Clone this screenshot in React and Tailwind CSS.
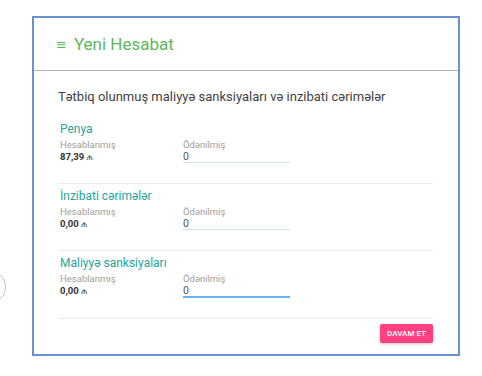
import React from 'react'

const sections = [
  { title: 'Penya', amount: '87,39', paid: '0', active: false },
  { title: 'İnzibati cərimələr', amount: '0,00', paid: '0', active: false },
  { title: 'Maliyyə sanksiyaları', amount: '0,00', paid: '0', active: true },
]

function Section({ title, amount, paid, active }) {
  return (
    <div className="pt-[4px] pb-[20px] pl-[2px]">
      <h3 className="text-[12px] leading-[16px] text-[#26a69a]">{title}</h3>
      <div className="flex mt-[2px]">
        <div className="w-[123px]">
          <p className="text-[9.5px] leading-[12px] text-[#9e9e9e]">Hesablanmış</p>
          <p className="text-[9.5px] leading-[12px] font-bold text-[#333]">
            {amount} <span className="font-normal text-[#555]">₼</span>
          </p>
        </div>
        <div className="w-[107px]">
          <p className="text-[9.5px] leading-[12px] text-[#9e9e9e]">Ödənilmiş</p>
          <div
            className={
              active
                ? 'h-[13px] border-b-2 border-[#64b5f6] text-[10.5px] leading-[12px] text-[#555]'
                : 'h-[12px] border-b border-[#c9e2f7] text-[10.5px] leading-[12px] text-[#555]'
            }
          >
            {paid}
          </div>
        </div>
      </div>
    </div>
  )
}

export default function App() {
  return (
    <div
      className="relative w-[482px] h-[376px] overflow-hidden bg-white pt-[16px] pl-[32px]"
      style={{ fontFamily: 'Roboto, "Noto Sans", "DejaVu Sans", sans-serif' }}
    >
      {/* kenardaki dairə */}
      <div className="absolute left-[-28px] top-[270px] w-[34px] h-[34px] rounded-full border-[1.5px] border-[#c4c4c4]"></div>

      <div className="w-[428px] h-[340px] border-2 border-[#6892d0] bg-white">
        {/* Header */}
        <div className="h-[53px] border-b border-[#b0b0b0] flex items-center pl-[22px]">
          <h1 className="text-[17px] leading-[24px] text-[#5cb85c] mt-[2px]">
            <span className="text-[13px] mr-[7px] relative top-[-1px]">≡</span>Yeni Hesabat
          </h1>
        </div>

        {/* Body */}
        <div className="pl-[24px] pr-[25px] pt-[16px]">
          <h2 className="text-[13px] leading-[20px] text-[#424242] mb-[10px]">
            Tətbiq olunmuş maliyyə sanksiyaları və inzibati cərimələr
          </h2>

          <div className="divide-y divide-[#ececec] border-b border-[#ececec]">
            {sections.map((s) => (
              <Section key={s.title} {...s} />
            ))}
          </div>

          <div className="flex justify-end pt-[5px]">
            <button className="w-[53px] h-[19px] rounded-[2px] bg-[#ff4081] text-white text-[8px] font-medium shadow-[0_1px_3px_rgba(0,0,0,0.25)]">
              DAVAM ET
            </button>
          </div>
        </div>
      </div>
    </div>
  )
}
